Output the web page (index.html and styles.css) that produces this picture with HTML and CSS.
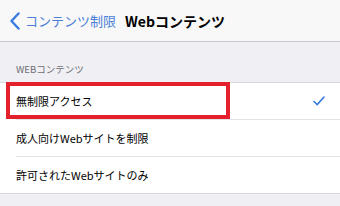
FILE: index.html
```html
<!DOCTYPE html>
<html>
<head>
  <meta charset="utf-8">
  <title>Webコンテンツ</title>
  <link rel="stylesheet" href="styles.css">
</head>
<body>
  <div class="navbar">
    <div class="back">
      <svg class="chevron" width="12" height="18" viewBox="0 0 12 18">
        <polyline points="9.5,1.5 2.5,9 9.5,16.5" fill="none" stroke="#3a7be0" stroke-width="2.4" stroke-linecap="round" stroke-linejoin="round"/>
      </svg>
      <span class="back-label">コンテンツ制限</span>
    </div>
    <div class="title">Webコンテンツ</div>
  </div>

  <div class="section-header">WEBコンテンツ</div>

  <div class="list">
    <div class="row selected">
      <span class="row-label">無制限アクセス</span>
      <svg class="check" width="12" height="10" viewBox="0 0 12 10">
        <polyline points="1,5.5 4.2,8.6 11,1" fill="none" stroke="#3a7be0" stroke-width="1.6" stroke-linecap="round" stroke-linejoin="round"/>
      </svg>
      <div class="highlight"></div>
    </div>
    <div class="row">
      <span class="row-label">成人向けWebサイトを制限</span>
    </div>
    <div class="row">
      <span class="row-label">許可されたWebサイトのみ</span>
    </div>
  </div>
</body>
</html>
```

FILE: styles.css
```css
body {
  margin: 0;
  background-color: #efeff4;
  font-family: "Noto Sans CJK JP", "Noto Sans", sans-serif;
  color: #000;
}

/* Navigation bar */
.navbar {
  height: 41px;
  background-color: #f8f8f8;
  border-bottom: 1px solid #c8c8cc;
  display: flex;
  align-items: center;
  padding-left: 9px;
  gap: 9px;
}

.back {
  display: flex;
  align-items: center;
  gap: 4px;
}

.back-label {
  font-size: 13px;
  color: #4a80d6;
}

.title {
  font-size: 14px;
  font-weight: bold;
}

/* Section */
.section-header {
  height: 40px;
  box-sizing: border-box;
  padding: 0 0 6px 16px;
  display: flex;
  align-items: flex-end;
  font-size: 9.5px;
  color: #6d6d72;
}

.list {
  background-color: #fff;
  border-top: 1px solid #d8d8dc;
  border-bottom: 1px solid #d8d8dc;
}

.row {
  position: relative;
  height: 36px;
  margin-left: 16px;
  padding-right: 15px;
  display: flex;
  align-items: center;
  justify-content: space-between;
  border-bottom: 1px solid #e4e4e8;
}

.row:last-child {
  border-bottom: none;
}

.row-label {
  font-size: 11px;
}

/* annotation box */
.highlight {
  position: absolute;
  left: -10px;
  top: -1px;
  width: 224px;
  height: 37px;
  box-sizing: border-box;
  border: 4px solid #e3202b;
}
```
